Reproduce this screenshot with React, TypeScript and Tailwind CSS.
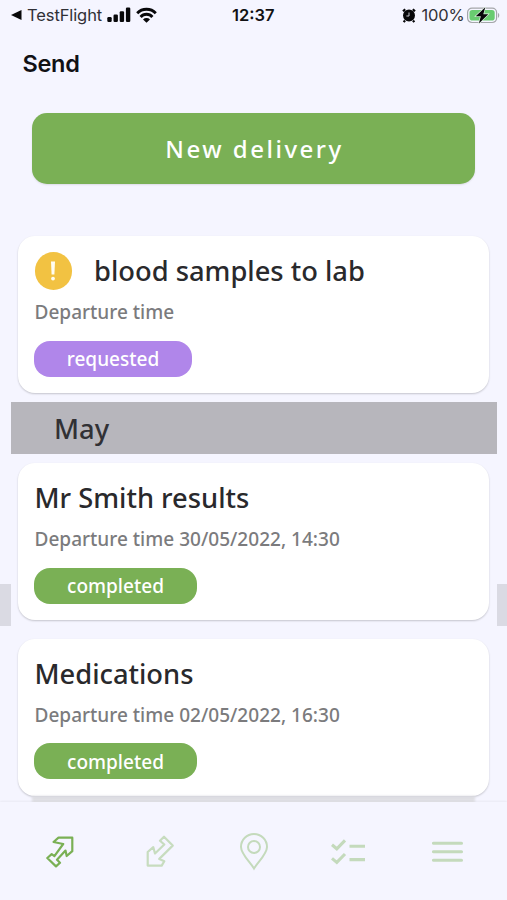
import React from "react";

type Delivery = { title: string; time: string; status: "requested" | "completed"; alert?: boolean };

function DeliveryCard({ title, time, status, alert }: Delivery) {
  const requested = status === "requested";
  return (
    <article className="relative mx-[18px] h-[157px] shrink-0 rounded-[17px] bg-white px-[16.5px] pt-4 shadow-[0_1px_2px_rgba(0,0,0,0.2)]">
      <div className="flex h-[38px] items-center">
        {alert && (
          <span className="mr-[22px] flex size-[37.5px] items-center justify-center rounded-full bg-[#f2c242]">
            <svg width="6" height="20" viewBox="0 0 6 20" fill="#fffdf2">
              <path d="M1 .5h4L4.4 13.5H1.600z" />
              <circle cx="3" cy="17.6" r="1.9" />
            </svg>
          </span>
        )}
        <h2 className="text-[27.3px] leading-[38px] font-medium whitespace-nowrap text-[#29292c]">{title}</h2>
      </div>
      <p className="mt-[9px] text-[19.05px] leading-[26px] font-medium whitespace-nowrap text-[#7b7b7d]">{time}</p>
      <span
        className={
          requested
            ? "mt-[15.5px] -ml-[0.5px] flex h-9 w-[158px] items-center justify-center rounded-[16px] bg-[#b086ea] pt-[2px] text-[19.05px] font-medium text-white"
            : "mt-[15.5px] -ml-[0.5px] flex h-9 w-[163px] items-center justify-center rounded-[16px] bg-[#7ab055] pt-[2px] text-[19.05px] font-medium text-white"
        }
      >
        {status}
      </span>
    </article>
  );
}

function StatusBar() {
  return (
    <div className="flex h-[30px] items-center font-['Inter','Liberation_Sans',sans-serif] text-[16.5px] text-[#303036]">
      <svg className="ml-[11px]" width="11" height="10" viewBox="0 0 11 10">
        <path d="M0 5 10.5 0v10z" fill="#08080a" />
      </svg>
      <span className="ml-[5px] w-[76px] whitespace-nowrap tracking-[-0.1px]">TestFlight</span>
      <svg className="ml-[4px]" width="24" height="16" viewBox="0 0 24 16" fill="#08080a">
        <rect x="0.3" y="10" width="4.4" height="5" rx="1.2" />
        <rect x="6.5" y="7.5" width="4.4" height="7.5" rx="1.2" />
        <rect x="12.7" y="4.2" width="4.4" height="10.8" rx="1.2" />
        <rect x="18.9" y="0.5" width="4.4" height="14.5" rx="1.2" />
      </svg>
      <svg className="ml-[5px]" width="21" height="16" viewBox="0 0 21 16" fill="none" stroke="#08080a" strokeWidth="2.9">
        <path d="M1.2 6.2a13 13 0 0 1 18.6 0" />
        <path d="M4.6 9.9a8 8 0 0 1 11.8 0" />
        <path d="M7 12.4a5 5 0 0 1 7 0L10.5 15.8z" fill="#08080a" stroke="none" />
      </svg>
      <span className="ml-[75px] w-[46px] whitespace-nowrap font-semibold text-[#111114]">12:37</span>
      <svg className="ml-[124px]" width="14" height="15" viewBox="0 0 14 15">
        <path d="m1 3.2 2.2-2M13 3.2l-2.2-2M3 12.5l-1.3 1.6M11 12.5l1.3 1.6" stroke="#08080a" strokeWidth="2.2" />
        <circle cx="7" cy="7.6" r="6" fill="#08080a" />
        <path d="M7 4.5v3.5H4.4" fill="none" stroke="#c8c8d0" strokeWidth="1" />
      </svg>
      <span className="ml-[5.5px] w-[43.5px] whitespace-nowrap tracking-[-0.2px]">100%</span>
      <svg className="ml-[2px]" width="33" height="17" viewBox="0 0 33 17">
        <rect x="0.6" y="1.1" width="29" height="14.4" rx="4.4" fill="none" stroke="#a5a7aa" strokeWidth="1.2" />
        <rect x="2.5" y="3" width="25.2" height="10.6" rx="2.8" fill="#69cc70" />
        <path d="M31 6c1.7.7 1.7 4 0 4.8z" fill="#a5a7aa" />
        <path d="M18.3.2 8.7 9.2h5.1l-1.9 7.3 9.4-9.3h-5z" fill="#08080a" stroke="#e9f8ec" strokeWidth="1.2" paintOrder="stroke" />
      </svg>
    </div>
  );
}

function BottomNav() {
  return (
    <nav className="relative z-10 flex h-[98px] shrink-0 items-center bg-[#f5f5ff] pt-px pl-[46px] shadow-[0_-1px_2px_rgba(0,0,0,0.05)]">
      <svg width="28" height="33" viewBox="0 0 28 33" fill="none" stroke="#7ab055" strokeWidth="2.2" strokeLinejoin="round">
        <path d="m7.5 7 5-4.300h13.800v13.500l-5.600 4.800-1.200-5.500-8.500 9.300 3 2.900-4 3.700L1.300 23l4.400-3.800 2.700 1.900L17.200 9z" />
      </svg>
      <svg className="ml-[72px]" width="28" height="33" viewBox="0 0 28 33" fill="none" stroke="#c7dcbf" strokeWidth="2.2" strokeLinejoin="round">
        <path d="m18 1.700 8.700 8.900-13.400 13.300 5 2.300-2.600 4.400h-14V17l5.600-4.800L9 18.500l9.300-9L14 5.700z" />
      </svg>
      <svg className="ml-[65px]" width="30" height="38" viewBox="0 0 30 38" fill="none" stroke="#c4dabc" strokeWidth="2">
        <path d="M15 35.500C11 29 2 21 2 14a13 13 0 0 1 26 0c0 7-9 15-13 21.500z" />
        <circle cx="15" cy="14" r="6" />
      </svg>
      <svg className="ml-[62px]" width="36" height="30" viewBox="0 0 36 30" fill="none" stroke="#c4dabc" strokeWidth="3.1">
        <path d="m1 7.8 4.8 4L14 3.4M1 21.4l4.8 4L14 17M18.5 9.3H34M18.5 22.6H34" />
      </svg>
      <svg className="ml-[65px]" width="32" height="24" viewBox="0 0 32 24" fill="none" stroke="#c4dabc" strokeWidth="3.1" strokeLinecap="round">
        <path d="M1.500 3.3h28M1.500 11.7h28M1.500 20.2h28" />
      </svg>
    </nav>
  );
}

export default function App() {
  return (
    <div className="relative flex h-[900px] w-[507px] flex-col overflow-hidden bg-[#f5f5ff] font-['Noto_Sans','Open_Sans',sans-serif]">
      <StatusBar />
      <h1 className="ml-[22.5px] h-[83px] pt-[19px] font-['Inter','Liberation_Sans',sans-serif] text-[23.5px] leading-[30px] font-semibold tracking-[-0.3px] text-[#111114]">Send</h1>
      <button className="mx-8 h-[71px] w-[443px] shrink-0 rounded-[15px] bg-[#7ab055] pl-[2px] text-[24px] font-medium tracking-[2.5px] text-white shadow-[0_1px_2px_rgba(0,0,0,0.1)]">New delivery</button>
      <main className="flex h-[618px] shrink-0 flex-col overflow-hidden pt-[52px]">
        <DeliveryCard title="blood samples to lab" time="Departure time" status="requested" alert />
        <h2 className="mr-[10px] ml-[11px] mt-[9px] h-[52px] shrink-0 bg-[#b7b6bc] pl-[43px] text-[27.3px] leading-[53px] font-medium text-[#313135]">May</h2>
        <div className="mt-[9px] flex flex-col gap-[18.5px]">
          <DeliveryCard title="Mr Smith results" time="Departure time 30/05/2022, 14:30" status="completed" />
          <DeliveryCard title="Medications" time="Departure time 02/05/2022, 16:30" status="completed" />
        </div>
        <div className="mx-[32px] h-[7px] shrink-0 bg-linear-to-b from-[#dadadf] to-[#e6e6ec] blur-[1px]" />
      </main>
      <BottomNav />
      <div className="absolute top-[584px] left-0 h-[42px] w-[11px] bg-[#dadae3]" />
      <div className="absolute top-[584px] right-0 h-[42px] w-[10px] bg-[#dadae3]" />
    </div>
  );
}
